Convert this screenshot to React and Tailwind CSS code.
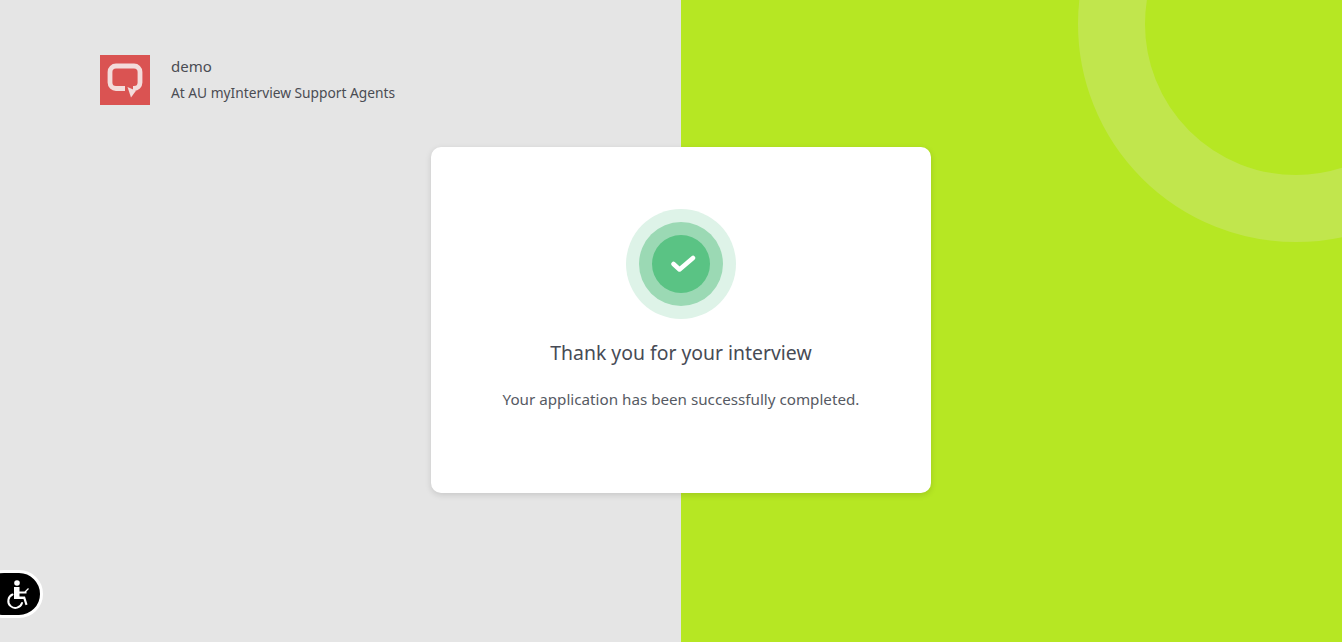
const FONT = "font-['Noto_Sans','Open_Sans',sans-serif]"

function Logo() {
  return (
    <div className="h-[50px] w-[50px] shrink-0 bg-[#da5352]">
      <svg viewBox="0 0 50 50" className="h-full w-full">
        <path
          d="M25 33.500H16a6 6 0 0 1-6-6V17a6 6 0 0 1 6-6h18a6 6 0 0 1 6 6v10.500a6 6 0 0 1-6 6h-1"
          fill="none"
          stroke="#f3dcdb"
          strokeWidth="4.800"
        />
        <path d="M27.500 32L36 35.800L31 42.500z" fill="#f3dcdb" />
      </svg>
    </div>
  )
}

function SuccessBadge() {
  return (
    <div className="flex h-[110px] w-[110px] items-center justify-center rounded-full bg-[#def3e8]">
      <div className="flex h-[84px] w-[84px] items-center justify-center rounded-full bg-[#9bd9b4]">
        <div className="flex h-[58px] w-[58px] items-center justify-center rounded-full bg-[#5ac384]">
          <svg viewBox="0 0 26 20" className="ml-[3px] h-[20px] w-[26px]">
            <path
              d="M3.500 10L9.500 15.500L23 4"
              fill="none"
              stroke="#fff"
              strokeWidth="4.500"
              strokeLinecap="round"
              strokeLinejoin="round"
            />
          </svg>
        </div>
      </div>
    </div>
  )
}

function AccessibilityButton() {
  return (
    <button
      type="button"
      aria-label="Accessibility"
      className="absolute left-[-20px] top-[570px] flex h-[48px] w-[63px] items-center justify-end rounded-full border-[3px] border-white bg-black pr-[9px]"
    >
      <svg viewBox="0 0 26 32" className="h-[32px] w-[26px]">
        <circle cx="12" cy="5" r="2.800" fill="#fff" />
        <path d="M9 9h5.500v4.500h7v2h-7v3h5.500l2.500 8-2 0.700-2-6.200H9z" fill="#fff" />
        <path d="M20 14l3.500-3.500" fill="none" stroke="#fff" strokeWidth="1.200" />
        <path
          d="M7.500 16.500a7 7 0 1 0 9.500 8.500"
          fill="none"
          stroke="#fff"
          strokeWidth="2"
          strokeLinecap="round"
        />
      </svg>
    </button>
  )
}

export default function App() {
  return (
    <div className={`relative flex h-[642px] w-full overflow-hidden ${FONT}`}>
      <div className="h-full w-[681px] bg-[#e5e5e5] pl-[100px] pt-[55px]">
        <div className="flex items-start gap-[21px]">
          <Logo />
          <div className="-mt-[1px] text-[#4a4c53]">
            <p className="text-[15px] leading-[24px]">demo</p>
            <p className="mt-[3px] text-[13.750px] leading-[24px]">At AU myInterview Support Agents</p>
          </div>
        </div>
      </div>
      <div className="h-full flex-1 bg-[#b6e723]" />

      <div className="absolute left-[1078px] top-[-194px] h-[436px] w-[436px] rounded-full border-[67px] border-[#c1e64d]" />

      <div className="absolute left-[431px] top-[147px] flex h-[346px] w-[500px] flex-col items-center rounded-[10px] bg-white pt-[62px] shadow-[0_2px_6px_rgba(0,0,0,0.13)]">
        <SuccessBadge />
        <h1 className="mt-[20px] text-[19.400px] font-normal leading-[28px] text-[#474b55]">
          Thank you for your interview
        </h1>
        <p className="mt-[20px] text-[15.200px] leading-[24px] text-[#565a63]">
          Your application has been successfully completed.
        </p>
      </div>

      <AccessibilityButton />
    </div>
  )
}
